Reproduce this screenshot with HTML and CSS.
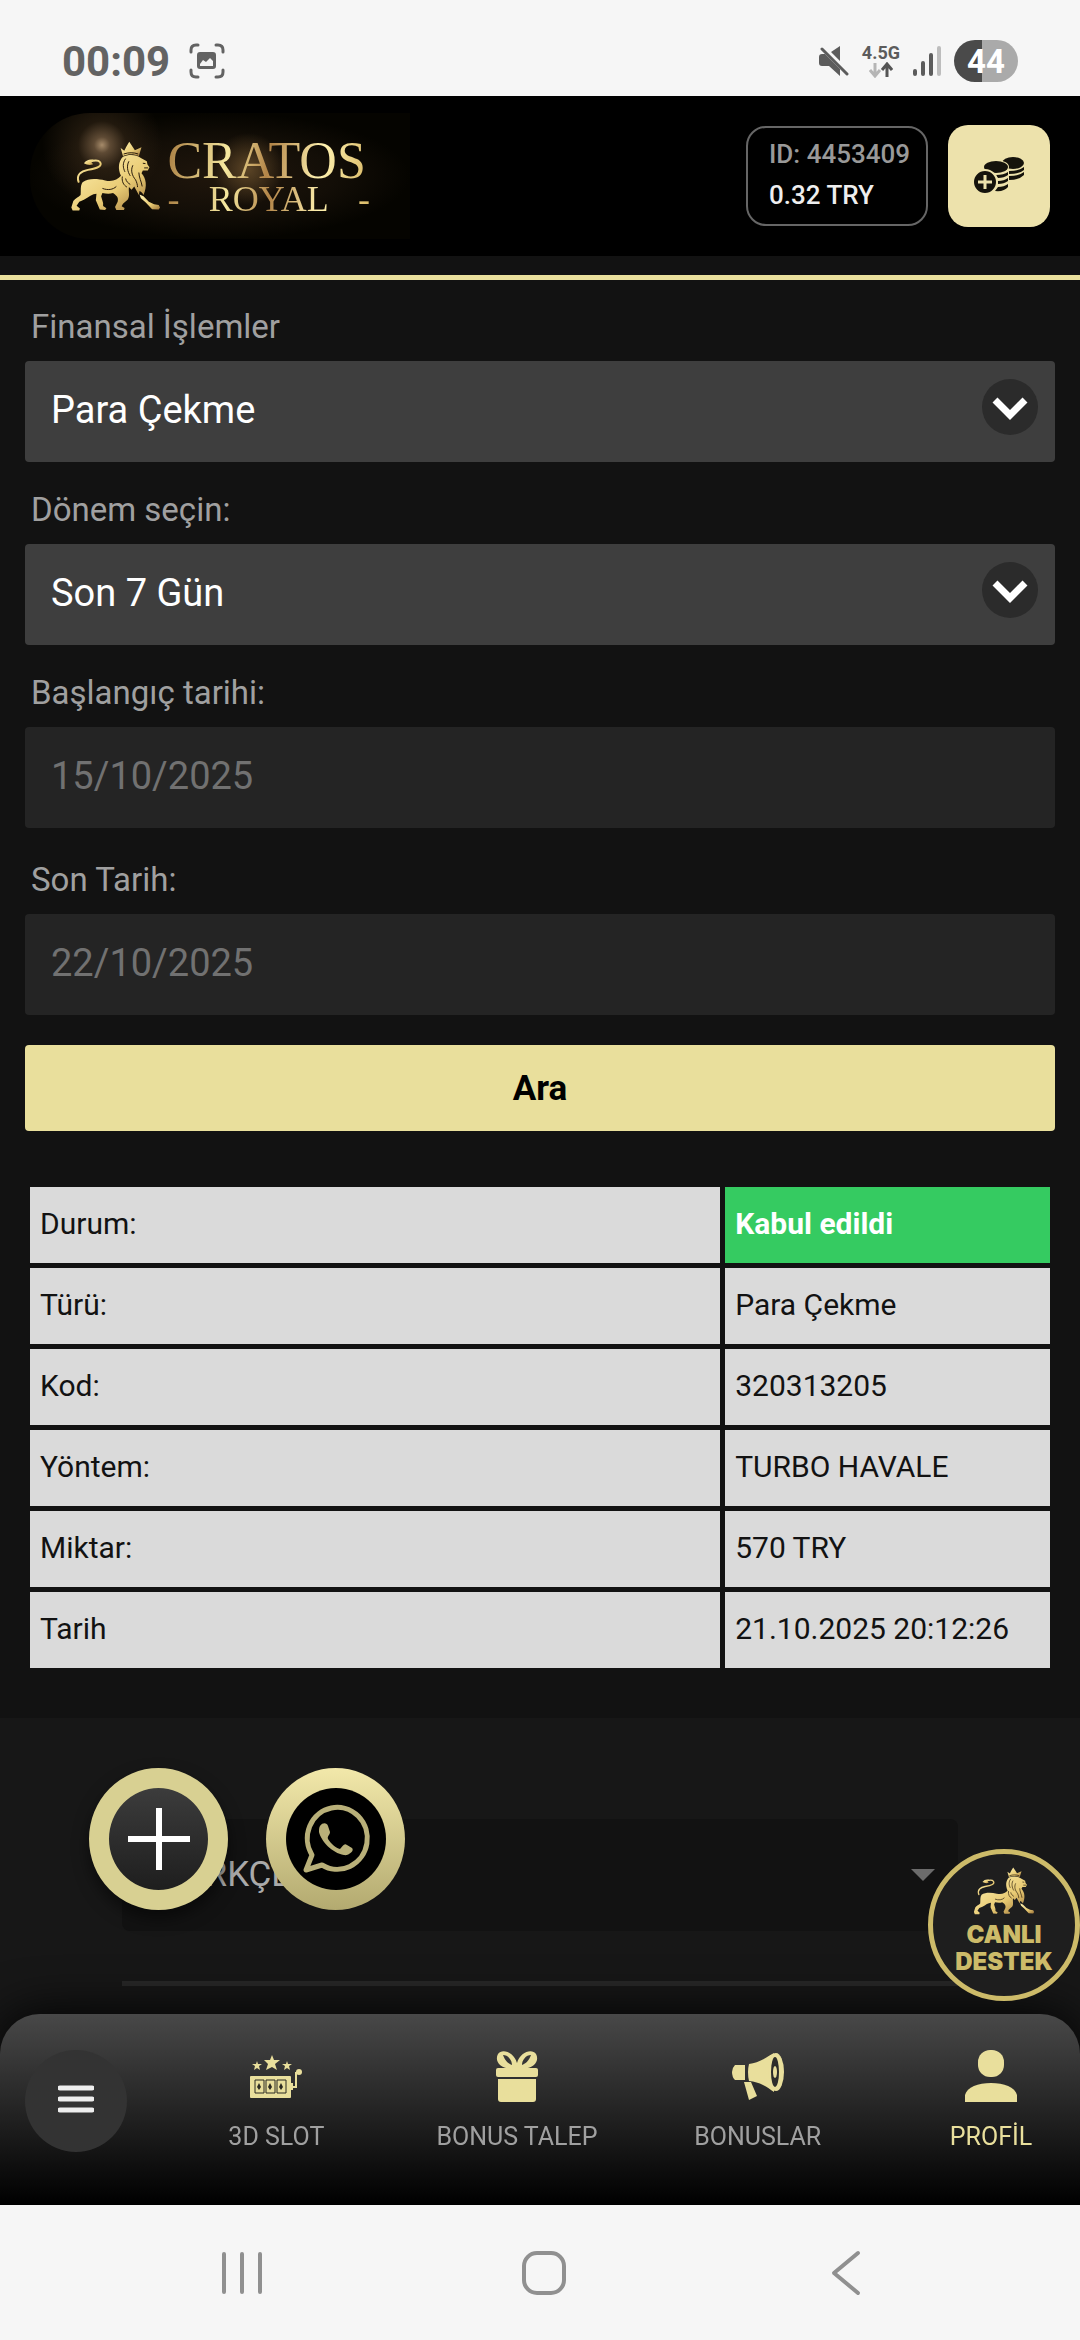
FILE: index.html
```html
<!DOCTYPE html>
<html lang="tr">
<head>
    <meta charset="UTF-8">
    <meta name="viewport" content="width=device-width, initial-scale=1.0">
    <title>Cratos Royal – Finansal İşlemler</title>
    <link rel="stylesheet" href="styles.css">
</head>
<body>

<svg class="defs" aria-hidden="true">
    <defs>
        <linearGradient id="gold" x1="0" y1="0" x2="1" y2="1">
            <stop offset="0" stop-color="#fff3b4"/>
            <stop offset="0.6" stop-color="#e9cb74"/>
            <stop offset="1" stop-color="#9c7338"/>
        </linearGradient>
        <symbol id="lion" viewBox="28 24 276 212">
            <path fill="none" stroke="url(#gold)" stroke-width="6" stroke-linecap="round" d="M54 146C46 124 62 114 82 110C112 106 126 98 119 87C113 79 98 82 86 86"/>
            <path fill="url(#gold)" d="M70 90C78 80 88 77 100 80L92 86L98 93C88 97 80 95 70 90Z"/>
            <path fill="url(#gold)" d="M181 44L192 52L198 40L207 25L217 40L224 51L244 42L236 68C220 61 204 61 188 68Z"/>
            <path fill="url(#gold)" d="M66 147C84 134 112 137 134 142C156 147 172 140 182 128C172 106 174 84 188 70C206 62 230 64 242 74L260 84L262 94L268 102L263 112L248 112L244 120C258 136 262 158 250 186C246 178 242 176 238 174L236 186L222 160L214 170L206 162C204 176 210 190 202 200L188 212L184 220L193 225L191 231L168 231L164 222L172 206C176 192 166 186 158 180C146 184 136 182 126 180L122 190L128 210L128 219L138 226L134 231L118 230L106 202L108 182C96 182 84 192 70 200L56 206L48 218L58 227L56 233L36 233L32 224L38 204C44 196 54 192 60 186C62 174 58 158 66 147Z"/>
            <path fill="url(#gold)" d="M238 184L250 190L266 206L282 214L296 216L300 224L296 230L276 229L256 208L242 196Z"/>
            <path fill="none" stroke="#2a1c0c" stroke-width="3" d="M126 166C142 172 158 170 168 160M196 76C186 90 188 104 194 116M206 84C198 98 202 116 210 128M186 130C184 146 190 156 200 162M218 96C210 112 216 128 226 140C230 148 232 156 232 162M236 118C236 132 244 146 246 160M248 90L256 91M252 104L264 104M190 62C206 57 220 57 234 62M196 136C198 146 204 150 210 154"/>
        </symbol>
    </defs>
</svg>

<div class="status-bar">
    <div class="status-group">
        <span class="time">00:09</span>
        <svg width="36" height="36" viewBox="0 0 36 36">
            <g fill="none" stroke="#636363" stroke-width="3" stroke-linecap="round">
                <path d="M2 9V7Q2 2 7 2H9M27 2H29Q34 2 34 7V9M34 27V29Q34 34 29 34H27M9 34H7Q2 34 2 29V27"/>
            </g>
            <path fill="#636363" fill-rule="evenodd" d="M11 9H24Q27 9 27 12V23Q27 26 24 26H11Q8 26 8 23V12Q8 9 11 9ZM11 21V23H24V18L21 15L17 19L14 17Z"/>
        </svg>
    </div>
    <div class="status-group">
        <svg width="30" height="30" viewBox="0 0 30 30">
            <path fill="#5c5c5c" d="M0 11Q0 8 3 8H6L21 23V30L10 20H3Q0 20 0 17ZM21 0V15L12 6Z"/>
            <path stroke="#5c5c5c" stroke-width="3" stroke-linecap="round" d="M3 3L28 28"/>
        </svg>
        <div class="network">
            <span>4.5G</span>
            <svg width="24" height="16" viewBox="0 0 24 16" fill="none" stroke-width="3">
                <path stroke="#b5b5b5" d="M6 1V13M1 8L6 14L11 8"/>
                <path stroke="#555" d="M18 15V3M13 8L18 2L23 8"/>
            </svg>
        </div>
        <svg width="28" height="30" viewBox="0 0 28 30" stroke-width="4" stroke-linecap="round">
            <path stroke="#5c5c5c" d="M2 25V28M10 17V28M18 9V28"/>
            <path stroke="#bdbdbd" d="M26 2V28"/>
        </svg>
        <span class="battery">44</span>
    </div>
</div>

<header class="header">
    <a class="logo" href="#" aria-label="Cratos Royal">
        <svg class="logo-lion" aria-hidden="true"><use href="#lion"/></svg>
        <span class="logo-text">
            <span class="logo-name">CRATOS</span>
            <span class="logo-sub"><span>-</span><span>ROYAL</span><span>-</span></span>
        </span>
    </a>
    <div class="account">
        <span class="account-id">ID: 4453409</span>
        <span class="account-balance">0.32 TRY</span>
    </div>
    <button class="deposit" type="button" aria-label="Para yatır">
        <svg width="52" height="38" viewBox="0 0 52 38">
            <g fill="#15130c">
                <ellipse cx="40" cy="6" rx="11" ry="6"/>
                <path d="M36 14Q46 14 51 10V13Q47 17 36 17ZM36 19Q46 19 51 15V18Q46 23 36 23Z"/>
            </g>
            <ellipse cx="23" cy="10" rx="13" ry="7" fill="#ede2ac"/>
            <g fill="#15130c">
                <ellipse cx="23" cy="10" rx="12" ry="6"/>
                <path d="M23 18Q31 18 35 15V18Q31 21 25 21ZM25 24Q31 24 35 21V24Q31 27 25 27ZM25 30Q31 30 35 27V30Q31 35 22 34Z"/>
            </g>
            <circle cx="12" cy="25" r="12" fill="#15130c" stroke="#ede2ac" stroke-width="2"/>
            <path d="M12 18V32M5 25H19" stroke="#ede2ac" stroke-width="3"/>
        </svg>
    </button>
</header>

<main class="content">
    <form class="filters">
        <div class="field">
            <label for="islem">Finansal İşlemler</label>
            <div class="select-wrap">
                <select id="islem">
                    <option>Para Çekme</option>
                </select>
                <svg class="chevron" viewBox="0 0 56 56" aria-hidden="true"><circle cx="28" cy="28" r="28" fill="#2b2b2b"/><path d="M13 21L28 36L43 21" fill="none" stroke="#fff" stroke-width="7"/></svg>
            </div>
        </div>
        <div class="field">
            <label for="donem">Dönem seçin:</label>
            <div class="select-wrap">
                <select id="donem">
                    <option>Son 7 Gün</option>
                </select>
                <svg class="chevron" viewBox="0 0 56 56" aria-hidden="true"><circle cx="28" cy="28" r="28" fill="#2b2b2b"/><path d="M13 21L28 36L43 21" fill="none" stroke="#fff" stroke-width="7"/></svg>
            </div>
        </div>
        <div class="field field-date">
            <label for="baslangic">Başlangıç tarihi:</label>
            <input id="baslangic" type="text" value="15/10/2025" disabled>
        </div>
        <div class="field field-date">
            <label for="son">Son Tarih:</label>
            <input id="son" type="text" value="22/10/2025" disabled>
        </div>
        <button class="search" type="button">Ara</button>
    </form>

    <table class="result">
        <tr><th scope="row">Durum:</th><td class="accepted">Kabul edildi</td></tr>
        <tr><th scope="row">Türü:</th><td>Para Çekme</td></tr>
        <tr><th scope="row">Kod:</th><td>320313205</td></tr>
        <tr><th scope="row">Yöntem:</th><td>TURBO HAVALE</td></tr>
        <tr><th scope="row">Miktar:</th><td>570 TRY</td></tr>
        <tr><th scope="row">Tarih</th><td>21.10.2025 20:12:26</td></tr>
    </table>
</main>

<footer class="footer">
    <div class="language">
        <select aria-label="Dil">
            <option>TÜRKÇE</option>
        </select>
        <svg width="24" height="12" viewBox="0 0 24 12" aria-hidden="true"><path fill="#6b6b6b" d="M0 0H24L12 12Z"/></svg>
    </div>
</footer>

<button class="fab fab-plus" type="button" aria-label="Aç">
    <svg width="62" height="62" viewBox="0 0 62 62"><path d="M31 0V62M0 31H62" stroke="#fff" stroke-width="6"/></svg>
</button>
<a class="fab fab-whatsapp" href="#" aria-label="WhatsApp">
    <svg width="100" height="102" viewBox="0 0 100 102">
        <ellipse cx="50" cy="51" rx="50" ry="51" fill="#000"/>
        <path fill="none" stroke="#b9b079" stroke-width="5" stroke-linejoin="round" d="M20 82L26 67A30 31 0 1 1 36 77Z"/>
        <path fill="#b9b079" d="M34 38C37 34 41 35 42 38L44 44C44 47 41 48 42 51C45 56 50 60 54 61C57 58 58 55 61 57L66 60C69 63 62 68 58 67C46 65 35 53 33 44C33 41 33 40 34 38Z"/>
    </svg>
</a>
<a class="support" href="#">
    <svg aria-hidden="true"><use href="#lion"/></svg>
    <span>CANLI</span>
    <span>DESTEK</span>
</a>

<div class="bottom">
    <nav class="tabs">
        <button class="menu" type="button" aria-label="Menü">
            <svg width="36" height="28" viewBox="0 0 36 28"><path d="M2 3H34M2 14H34M2 25H34" stroke="#eee" stroke-width="5" stroke-linecap="round"/></svg>
        </button>
        <div class="tab-list">
            <a href="#">
                <svg viewBox="0 0 52 52">
                    <g fill="#e9df9c">
                        <path d="M22 5L24 10H30L25 14L27 20L22 17L16 20L18 14L14 10H20ZM7 11L8 14H12L9 16L10 20L7 18L4 20L5 16L2 14H6ZM37 11L38 14H42L39 16L40 20L37 18L34 20L35 16L32 14H36Z"/>
                        <rect x="0" y="26" width="41" height="22" rx="1"/>
                        <circle cx="49" cy="22" r="3"/>
                    </g>
                    <path d="M48 23H46V37H42M42 33V40" fill="none" stroke="#e9df9c" stroke-width="2"/>
                    <path d="M5 30H14V43H5ZM16 30H25V43H16ZM27 30H36V43H27Z" fill="none" stroke="#2b2a22" stroke-width="1"/>
                    <path d="M9 33L11 37L9 40L7 37ZM20 33L22 37L20 40L18 37ZM31 33L33 37L31 40L29 37Z" fill="#2b2a22"/>
                </svg>
                3D SLOT
            </a>
            <a href="#">
                <svg viewBox="0 0 52 52">
                    <path fill="#e9df9c" fill-rule="evenodd" d="M22 18C10 20 3 11 7 4C11-2 23 2 26 13C29 2 41-2 45 4C49 11 42 20 30 18ZM12 5C14 11 18 14 21 15C21 10 17 5 12 5ZM40 5C35 5 31 10 31 15C34 14 38 11 40 5Z"/>
                    <rect x="5" y="18" width="42" height="9" rx="2" fill="#e9df9c"/>
                    <path fill="#e9df9c" d="M7 29H45V49Q45 52 42 52H10Q7 52 7 49Z"/>
                </svg>
                BONUS TALEP
            </a>
            <a href="#">
                <svg viewBox="0 0 52 52">
                    <g fill="#e9df9c">
                        <path d="M3 15H13V30H3Q0 27 0 22Q0 18 3 15ZM12 32H19L25 46L17 50Z"/>
                        <path d="M17 14C28 13 36 6 42 3V42C35 37 28 32 17 31Q15 22 17 14Z"/>
                        <ellipse cx="44" cy="22" rx="8" ry="19"/>
                    </g>
                    <ellipse cx="43" cy="22" rx="4" ry="15" fill="#2d2d2a"/>
                    <ellipse cx="43" cy="22" rx="2" ry="6" fill="#e9df9c"/>
                </svg>
                BONUSLAR
            </a>
            <a class="active" href="#">
                <svg viewBox="0 0 52 52">
                    <rect x="13" y="0" width="26" height="27" rx="12" fill="#e9df9c"/>
                    <path d="M0 52V45C2 37 13 33 26 33C39 33 50 37 52 45V52Z" fill="#e9df9c"/>
                </svg>
                PROFİL
            </a>
        </div>
    </nav>
    <div class="system-nav">
        <button type="button" aria-label="Son uygulamalar">
            <svg width="46" height="46" viewBox="0 0 46 46"><path d="M5 4V42M23 4V42M41 4V42"/></svg>
        </button>
        <button type="button" aria-label="Ana ekran">
            <svg width="46" height="46" viewBox="0 0 46 46"><rect x="3" y="3" width="40" height="40" rx="13"/></svg>
        </button>
        <button type="button" aria-label="Geri">
            <svg width="46" height="46" viewBox="0 0 46 46"><path d="M35 3L11 23L35 43"/></svg>
        </button>
    </div>
</div>

</body>
</html>
```
FILE: styles.css
```css
* {
    box-sizing: border-box;
}

body {
    display: flex;
    flex-direction: column;
    min-height: 100vh;
    margin: 0;
    background-color: #121212;
    color: #fff;
    font-family: Roboto, sans-serif;
}

a {
    color: inherit;
    text-decoration: none;
}

button, select, input {
    border: 0;
    padding: 0;
    font-family: inherit;
}

svg {
    display: block;
}

.defs {
    position: absolute;
    width: 0;
    height: 0;
}

/* status bar */
.status-bar {
    display: flex;
    justify-content: space-between;
    height: 96px;
    padding: 26px 62px 0;
    background-color: #f6f6f6;
}

.status-group {
    display: flex;
    align-items: center;
    height: 70px;
    gap: 13px;
}

.time {
    margin-right: 6px;
    color: #636363;
    font-size: 42px;
    font-weight: 700;
}

.network {
    display: flex;
    flex-direction: column;
    align-items: center;
    color: #5c5c5c;
    font-size: 18px;
    font-weight: 700;
    line-height: 18px;
}

.battery {
    width: 64px;
    height: 42px;
    border-radius: 21px;
    background: linear-gradient(to right, #4a4a4a 44%, #aaa 44%);
    color: #fff;
    font-size: 33px;
    font-weight: 700;
    line-height: 44px;
    text-align: center;
}

/* header */
.header {
    display: flex;
    align-items: center;
    gap: 20px;
    height: 160px;
    padding: 0 30px;
    background-color: #000;
}

.logo {
    display: flex;
    align-items: center;
    gap: 6px;
    width: 380px;
    height: 126px;
    margin-right: auto;
    padding: 0 40px;
    background:
        radial-gradient(circle at 72px 32px, #a68b6a 0, #5e4a34 8px, rgba(60, 44, 26, 0.5) 24px, transparent 60px),
        radial-gradient(circle at 218px 56px, #5c4526 0, transparent 36px),
        radial-gradient(ellipse closest-side at 50% 50%, #20160c 0, #130e07 60%, #050400 100%);
    border-radius: 60px 0 0 60px;
}

.logo-lion {
    width: 92px;
    height: 71px;
}

.logo-text {
    display: flex;
    flex-direction: column;
    width: 204px;
    padding-top: 4px;
    font-family: "Liberation Serif", serif;
}

.logo-name, .logo-sub {
    background: linear-gradient(100deg, #a87c40, #f7e9a0 30%, #b38548 50%, #fff2b0 75%, #d8b764);
    -webkit-background-clip: text;
    background-clip: text;
    color: transparent;
}

.logo-name {
    font-size: 52px;
    line-height: 42px;
}

.logo-sub {
    display: flex;
    justify-content: space-between;
    font-size: 36px;
    line-height: 34px;
}

.account {
    display: flex;
    flex-direction: column;
    justify-content: center;
    width: 182px;
    height: 100px;
    padding: 0 0 3px 21px;
    border: 2px solid #666;
    border-radius: 20px;
    font-size: 26px;
    font-weight: 500;
    line-height: 41px;
}

.account-id {
    color: #999;
}

.account-balance {
    color: #eee;
}

.deposit {
    display: flex;
    align-items: center;
    justify-content: center;
    width: 102px;
    height: 102px;
    border-radius: 20px;
    background-color: #ede2ac;
}

/* filter form */
.content {
    margin-top: 19px;
    border-top: 5px solid #e9df9c;
    padding: 0 25px 45px;
}

.field {
    margin-bottom: 1px;
}

.field-date {
    margin-bottom: 5px;
}

.field label {
    display: block;
    padding: 27px 6px 14px;
    color: #a0a0a0;
    font-size: 33px;
    line-height: 40px;
}

.field select, .field input {
    display: block;
    width: 100%;
    height: 101px;
    padding: 0 26px 3px;
    border-radius: 4px;
    font-size: 38px;
}

.field select {
    appearance: none;
    background-color: #3e3e3e;
    color: #fff;
}

.field input {
    background-color: #242424;
    color: #717171;
}

.select-wrap {
    position: relative;
}

.chevron {
    position: absolute;
    top: 18px;
    right: 17px;
    width: 56px;
    height: 56px;
    pointer-events: none;
}

.search {
    display: block;
    width: 100%;
    height: 86px;
    margin-top: 30px;
    border-radius: 4px;
    background-color: #e9df9c;
    color: #000;
    font-size: 35px;
    font-weight: 700;
}

/* result */
.result {
    width: 100%;
    margin-top: 51px;
    border-spacing: 5px;
}

.result th, .result td {
    height: 76px;
    padding: 0 10px 4px;
    background-color: #dadada;
    color: #121212;
    font-size: 30px;
    font-weight: 400;
    text-align: left;
}

.result th {
    width: 68%;
}

.result .accepted {
    background-color: #35cb61;
    color: #fff;
    font-weight: 700;
}

/* footer */
.footer {
    flex: 1;
    padding: 101px 122px 0;
    background-color: #171717;
}

.language {
    display: flex;
    align-items: center;
    height: 112px;
    margin-bottom: 50px;
    padding-right: 23px;
    border-radius: 8px;
    background-color: #121212;
}

.language select {
    flex: 1;
    height: 100%;
    padding: 0 40px 2px;
    appearance: none;
    background: none;
    color: #aaa;
    font-size: 35px;
}

.footer::after {
    content: "";
    display: block;
    height: 5px;
    background-color: #282828;
}

/* floating buttons */
.fab {
    position: fixed;
    bottom: 430px;
    display: flex;
    align-items: center;
    justify-content: center;
    width: 139px;
    height: 142px;
    border-radius: 50%;
}

.fab-plus {
    left: 89px;
    border: 20px solid #d8d092;
    background: linear-gradient(#3c3c3c, #1e1e1e);
    box-shadow: 0 8px 16px rgba(0, 0, 0, 0.5);
}

.fab-plus svg {
    flex: none;
}

.fab-whatsapp {
    left: 266px;
    background: linear-gradient(#f2e8aa, #b3aa70);
}

.support {
    position: fixed;
    right: 0;
    bottom: 339px;
    z-index: 2;
    display: flex;
    flex-direction: column;
    align-items: center;
    width: 152px;
    height: 152px;
    padding-top: 10px;
    border: 5px solid #cdbb69;
    border-radius: 50%;
    background-color: #1e1e1e;
    color: #cdbb69;
    font-family: Inter, sans-serif;
    font-size: 24px;
    font-weight: 900;
    line-height: 27px;
}

.support svg {
    width: 62px;
    height: 54px;
    margin-bottom: 3px;
}

/* bottom navigation */
.bottom {
    position: fixed;
    right: 0;
    bottom: 0;
    left: 0;
}

.tabs {
    display: flex;
    height: 191px;
    padding: 36px 0 0 25px;
    border-radius: 40px 40px 0 0;
    background: linear-gradient(#484848, #000);
    box-shadow: 0 0 50px #000;
}

.menu {
    display: flex;
    align-items: center;
    justify-content: center;
    width: 102px;
    height: 102px;
    margin-right: 29px;
    padding-bottom: 4px;
    border-radius: 50%;
    background-color: #333;
}

.tab-list {
    display: grid;
    flex: 1;
    grid-template-columns: repeat(3, 1fr) 202px;
}

.tab-list a {
    display: flex;
    flex-direction: column;
    align-items: center;
    gap: 20px;
    color: #a0a0a0;
    font-size: 25px;
    line-height: 30px;
    white-space: nowrap;
}

.tab-list svg {
    width: 52px;
    height: 52px;
}

.tab-list .active {
    padding-left: 24px;
    color: #e9df9c;
}

.system-nav {
    display: grid;
    grid-template-columns: repeat(3, 1fr);
    height: 135px;
    padding: 0 83px 0 91px;
    background-color: #f6f6f6;
}

.system-nav button {
    display: flex;
    align-items: center;
    justify-content: center;
    background: none;
}

.system-nav svg {
    fill: none;
    stroke: #909090;
    stroke-width: 4;
    stroke-linecap: round;
    stroke-linejoin: round;
}
```
